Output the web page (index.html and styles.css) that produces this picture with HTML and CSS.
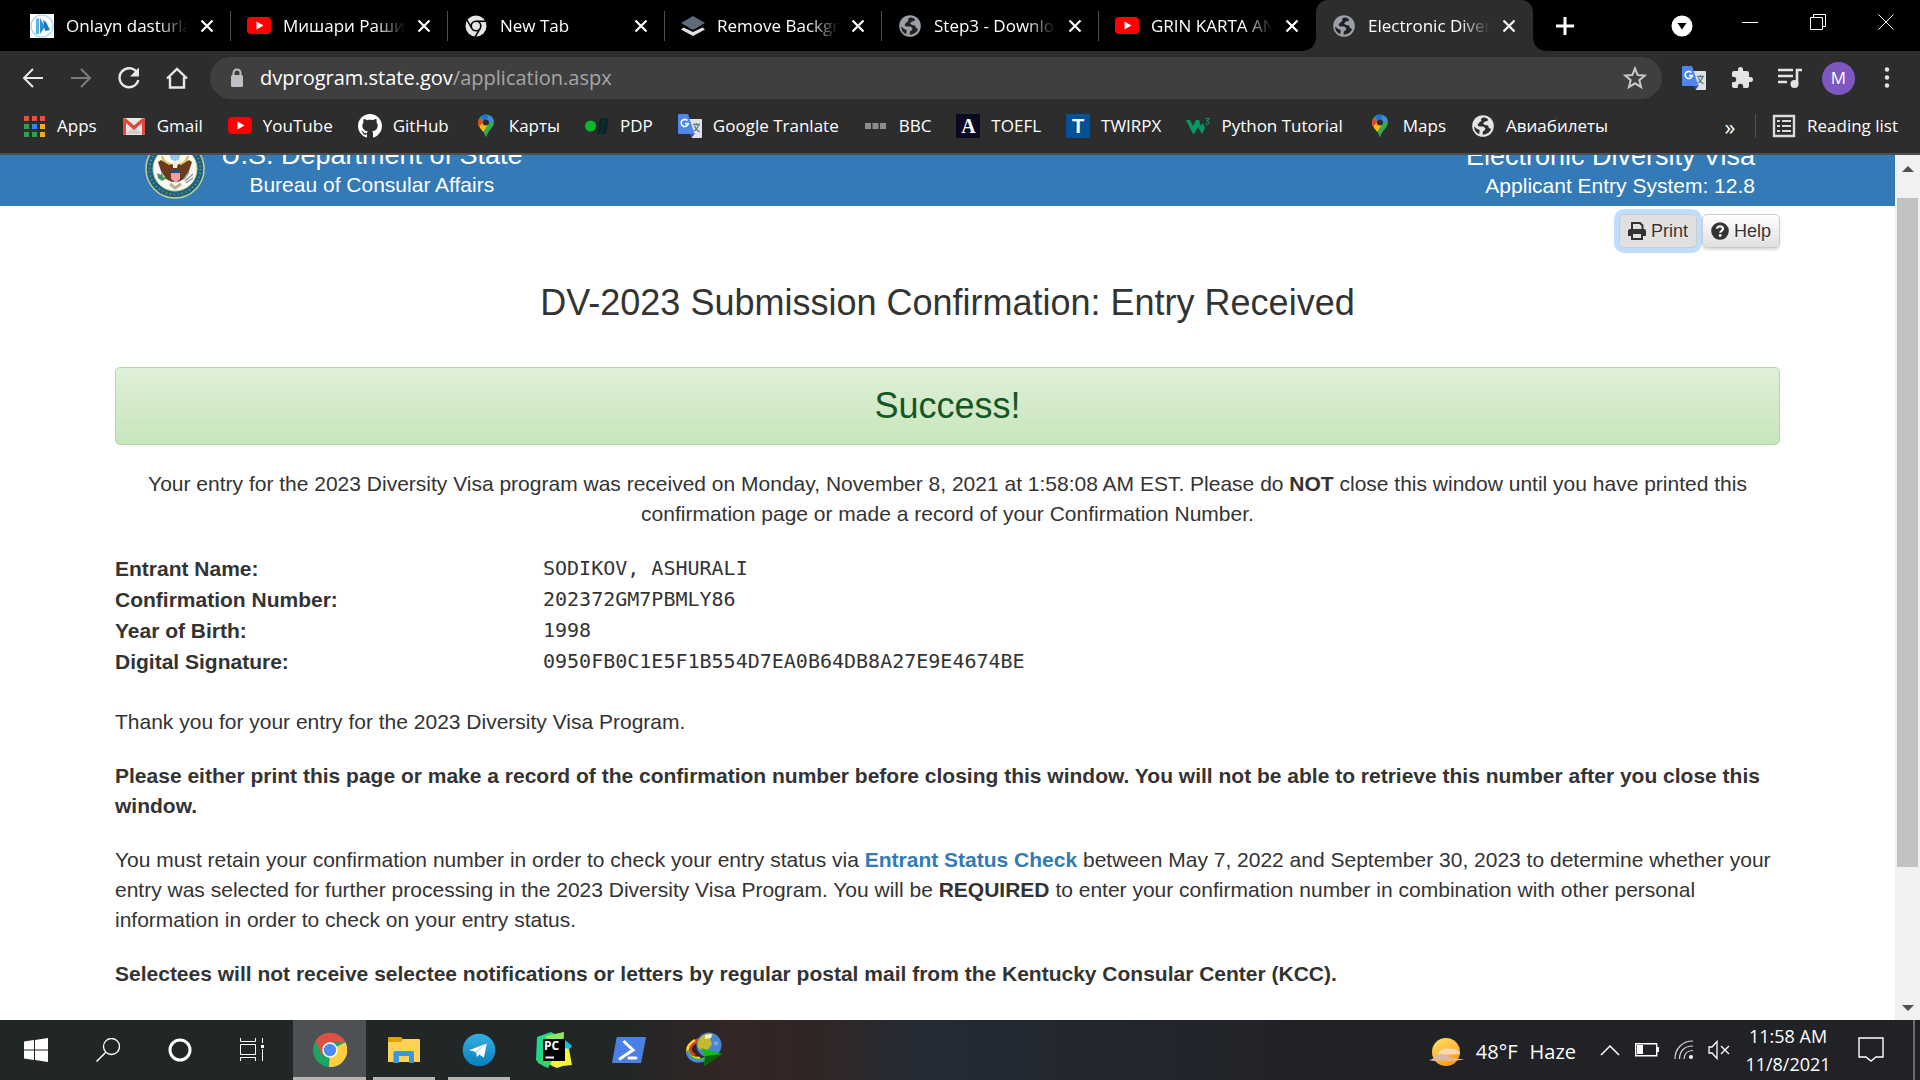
FILE: index.html
```html
<!DOCTYPE html>
<html lang="en">
<head>
<meta charset="utf-8">
<title>Electronic Diversity Visa</title>
<link rel="stylesheet" href="styles.css">
</head>
<body>
<svg class="sprites" aria-hidden="true">
  <symbol id="youtube" viewBox="0 0 24 24"><rect y="3" width="24" height="17" rx="4" fill="#f00"/><path d="M9.500 7.500v8l7-4z" fill="#fff"/></symbol>
  <symbol id="globe" viewBox="0 0 24 24"><circle cx="12" cy="12" r="10.800" fill="currentColor"/><path d="M12 3.500c-2 .8-2.500 2-1.500 3.200l-2.500 2-1.500 2.300 1.500 1.500h4.500l2 2-1 2-1.500.8-.5 3.200c4 .4 7.500-2.200 8.600-5.500l-2.100-1-1-2.500-3-.5-2-1.500 2-2 2.500-.5.500-2c-1.500-1-3-1.600-5-1.500z" class="globe-cut"/><path d="M3.200 12.500l3 2.500 2.500 1-.5 4.200C5.200 18.800 3 16 3.200 12.500z" class="globe-cut"/></symbol>
  <symbol id="maps" viewBox="0 0 24 24"><clipPath id="pin"><path d="M12 .5a8 8 0 0 0-8 8c0 5 5.500 7 8 15 2.500-8 8-10 8-15a8 8 0 0 0-8-8z"/></clipPath><g clip-path="url(#pin)"><path fill="#34a853" d="M0 0h24v24H0z"/><path fill="#fbbc04" d="M0 18L16 3l-8 18z"/><path fill="#fbbc04" d="M3 10l5-2 6 3-7 9z"/><path fill="#ea4335" d="M0 0l10 8-7 6z"/><path fill="#1a73e8" d="M4 0l8 9 3-9z"/><path fill="#4285f4" d="M8 12L18 0l4 6z"/></g><circle cx="12" cy="8.500" r="3" fill="#2d2d2d"/></symbol>
  <symbol id="translate" viewBox="0 0 24 24"><path fill="#dfe3e8" d="M9 5h14a1 1 0 0 1 1 1v17a1 1 0 0 1-1 1h-9z"/><path fill="#3349b8" d="M11 19h6l-3.500 5z"/><path fill="#4f86ec" d="M1 0h9l6.500 20H1a1 1 0 0 1-1-1V1a1 1 0 0 1 1-1z"/><path d="M9.500 6.600a3.600 3.600 0 1 0 .8 3H7" fill="none" stroke="#fff" stroke-width="1.600"/><path d="M15 10.500h7M18.500 9v1.500M20.500 11c-.7 3-2.500 5-5 6M16.500 12c1 2.500 2.500 4.500 5 6" fill="none" stroke="#607d8b" stroke-width="1.300"/></symbol>
  <symbol id="close" viewBox="0 0 14 14"><path d="M1.500 1.500l11 11M12.500 1.500l-11 11" stroke="#fff" stroke-width="2.200" fill="none"/></symbol>
</svg>

<header class="browser">
  <div class="tabstrip">
    <div class="tab"><svg class="icon" viewBox="0 0 24 24"><path fill="#fff" d="M0 0h24v24H0z"/><circle cx="12" cy="12" r="11" fill="#fff" stroke="#a5d2f0" stroke-width="1.200"/><path d="M6 5l3-1v16H6z" fill="#5ab4ea"/><path d="M10 4l5 9-5 7z" fill="#2b8fd6"/><path d="M13 6l3 2 4 8-5 1z" fill="#1976c5"/></svg><span class="tab-title">Onlayn dasturlash</span><button class="tab-close" aria-label="Close tab"><svg><use href="#close"/></svg></button></div>
    <div class="tab"><svg class="icon"><use href="#youtube"/></svg><span class="tab-title">Мишари Рашид</span><button class="tab-close" aria-label="Close tab"><svg><use href="#close"/></svg></button></div>
    <div class="tab"><svg class="icon" viewBox="0 0 24 24"><circle cx="12" cy="12" r="10.500" fill="#e4e5e7"/><circle cx="12" cy="12" r="4.800" fill="#e4e5e7" stroke="#000" stroke-width="1.600"/><path d="M12 7.200h10M7.800 14.400L3 6M16.200 14.400L11 23" stroke="#000" stroke-width="1.500"/></svg><span class="tab-title">New Tab</span><button class="tab-close" aria-label="Close tab"><svg><use href="#close"/></svg></button></div>
    <div class="tab"><svg class="icon" viewBox="0 0 24 24"><path d="M2.500 13.500L12 18l9.500-4.500 2.500 2L12 22 0 15.500z" fill="#dfe3e6"/><path d="M12 2l12 7-12 7L0 9z" fill="#5b6b7b"/></svg><span class="tab-title">Remove Background</span><button class="tab-close" aria-label="Close tab"><svg><use href="#close"/></svg></button></div>
    <div class="tab"><svg class="icon globe-gray"><use href="#globe"/></svg><span class="tab-title">Step3 - Download</span><button class="tab-close" aria-label="Close tab"><svg><use href="#close"/></svg></button></div>
    <div class="tab"><svg class="icon"><use href="#youtube"/></svg><span class="tab-title">GRIN KARTA ANKETA</span><button class="tab-close" aria-label="Close tab"><svg><use href="#close"/></svg></button></div>
    <div class="tab tab-active"><svg class="icon globe-gray"><use href="#globe"/></svg><span class="tab-title">Electronic Diversity</span><button class="tab-close" aria-label="Close tab"><svg><use href="#close"/></svg></button></div>
    <button class="new-tab" aria-label="New tab"><svg viewBox="0 0 18 18"><path d="M9 0v18M0 9h18" stroke="#fff" stroke-width="3"/></svg></button>
    <div class="window-controls">
      <button aria-label="Search tabs"><svg class="search-tabs" viewBox="0 0 22 22"><circle cx="11" cy="11" r="10.500" fill="#fff"/><path d="M6.500 8h9L11 14.500z" fill="#000"/></svg></button>
      <button aria-label="Minimize"><svg viewBox="0 0 16 16"><path d="M0 8.500h16" stroke="#fff"/></svg></button>
      <button aria-label="Restore"><svg viewBox="0 0 16 16"><path d="M.5 3.500h12v12H.5zM3.500 3.500v-3h12v12h-3" fill="none" stroke="#fff"/></svg></button>
      <button aria-label="Close"><svg viewBox="0 0 16 16"><path d="M.5.5l15 15M15.500.5l-15 15" stroke="#fff"/></svg></button>
    </div>
  </div>

  <div class="toolbar">
    <button aria-label="Back"><svg viewBox="0 0 24 24"><path d="M22 12H3M12 3l-9 9 9 9" fill="none" stroke="#e8e8e8" stroke-width="2"/></svg></button>
    <button aria-label="Forward"><svg viewBox="0 0 24 24"><path d="M2 12h19M12 3l9 9-9 9" fill="none" stroke="#7c7c7c" stroke-width="2"/></svg></button>
    <button aria-label="Reload"><svg viewBox="0 0 24 24"><path d="M20 6.500A9.500 9.500 0 1 0 21.300 14" fill="none" stroke="#e8e8e8" stroke-width="2.400"/><path d="M22 1.500v9h-9z" fill="#e8e8e8"/></svg></button>
    <button aria-label="Home"><svg viewBox="0 0 24 24"><path d="M2 12.500L12 3l10 9.500M5 11v10.500h14V11" fill="none" stroke="#e8e8e8" stroke-width="2.400"/></svg></button>
    <div class="omnibox">
      <svg class="lock" viewBox="0 0 14 20"><path d="M3.500 9V5a3.500 3.500 0 0 1 7 0v4" fill="none" stroke="#bdc1c6" stroke-width="2"/><rect x="1" y="7" width="12" height="12" rx="1.500" fill="#bdc1c6"/></svg>
      <span class="url">dvprogram.state.gov<span class="url-path">/application.aspx</span></span>
      <svg class="star" viewBox="0 0 24 24"><path d="M12 2.500l2.700 6.600 7.100.5-5.500 4.600 1.800 6.900-6.100-3.800-6.100 3.800 1.800-6.900-5.500-4.600 7.100-.5z" fill="none" stroke="#c8c8c8" stroke-width="2"/></svg>
    </div>
    <div class="tools">
      <button aria-label="Translate"><svg><use href="#translate"/></svg></button>
      <button aria-label="Extensions"><svg viewBox="0 0 24 24"><path d="M20.500 11H19V7a2 2 0 0 0-2-2h-4V3.500a2.500 2.500 0 0 0-5 0V5H4a2 2 0 0 0-2 2v3.800h1.500a2.700 2.700 0 0 1 0 5.400H2V20a2 2 0 0 0 2 2h3.800v-1.500a2.700 2.700 0 0 1 5.400 0V22H17a2 2 0 0 0 2-2v-4h1.500a2.500 2.500 0 0 0 0-5z" fill="#e4e4e4"/></svg></button>
      <button aria-label="Media controls"><svg viewBox="0 0 24 24"><path d="M0 4h15M0 10h15M0 16h9" stroke="#e4e4e4" stroke-width="2.400"/><path d="M19 18V4h5" fill="none" stroke="#e4e4e4" stroke-width="2.600"/><circle cx="16.500" cy="18" r="4" fill="#e4e4e4"/></svg></button>
      <button class="avatar" aria-label="Profile">M</button>
      <button aria-label="Menu"><svg viewBox="0 0 24 24"><g fill="#e4e4e4"><circle cx="12" cy="3.500" r="2.200"/><circle cx="12" cy="11.500" r="2.200"/><circle cx="12" cy="19.500" r="2.200"/></g></svg></button>
    </div>
  </div>

  <nav class="bookmarks">
    <a href="#"><svg class="icon" viewBox="0 0 24 24"><path d="M2 2h5v5H2zM10 2h5v5h-5zM18 2h5v5h-5z" fill="#ee4b3a"/><path d="M2 10h5v5H2zM2 18h5v5H2zM10 18h5v5h-5z" fill="#2fa052"/><path d="M10 10h5v5h-5z" fill="#2d87f3"/><path d="M18 10h5v5h-5zM18 18h5v5h-5z" fill="#f9ab12"/></svg>Apps</a>
    <a href="#"><svg class="icon" viewBox="0 0 24 24"><rect x="1" y="4" width="22" height="17" rx="2" fill="#e9e6e4"/><path d="M4 20l8-8 8 8z" fill="#d2cecb"/><path d="M1 6a2 2 0 0 1 3-1.500l8 7 8-7A2 2 0 0 1 23 6v13a2 2 0 0 1-2 2h-1V9l-8 7-8-7v12H3a2 2 0 0 1-2-2z" fill="#dd4b3e"/></svg>Gmail</a>
    <a href="#"><svg class="icon"><use href="#youtube"/></svg>YouTube</a>
    <a href="#"><svg class="icon" viewBox="0 0 16 16"><path fill="#fff" d="M8 0C3.580 0 0 3.580 0 8c0 3.540 2.290 6.530 5.470 7.590.4.070.55-.17.550-.38 0-.19-.01-.82-.01-1.490-2.010.37-2.530-.49-2.690-.94-.09-.23-.48-.94-.82-1.130-.28-.15-.68-.52-.01-.53.630-.01 1.080.58 1.230.82.720 1.210 1.870.87 2.330.66.070-.52.280-.87.510-1.070-1.780-.2-3.640-.89-3.640-3.950 0-.87.310-1.590.82-2.150-.08-.2-.36-1.020.08-2.120 0 0 .67-.21 2.200.82.640-.18 1.320-.27 2-.27s1.360.09 2 .27c1.530-1.040 2.200-.82 2.200-.82.440 1.100.16 1.920.08 2.120.51.560.82 1.270.82 2.150 0 3.070-1.870 3.750-3.650 3.950.29.250.54.730.54 1.480 0 1.070-.01 1.930-.01 2.200 0 .21.150.46.550.38A8.010 8.010 0 0 0 16 8c0-4.420-3.580-8-8-8z"/></svg>GitHub</a>
    <a href="#"><svg class="icon"><use href="#maps"/></svg>Карты</a>
    <a href="#"><svg class="icon" viewBox="0 0 24 24"><circle cx="5.500" cy="12" r="5.500" fill="#08b82f"/><path d="M15 4h4l-3 16h-4zM20 4h4l-3 16h-4z" fill="#06282c"/></svg>PDP</a>
    <a href="#"><svg class="icon"><use href="#translate"/></svg>Google Tranlate</a>
    <a href="#"><svg class="icon" viewBox="0 0 24 24"><path d="M1 9h6v6H1zM8.500 9h6v6h-6zM16 9h6v6h-6z" fill="#8c8c8c"/></svg>BBC</a>
    <a href="#"><span class="icon letter letter-a">A</span>TOEFL</a>
    <a href="#"><span class="icon letter letter-t">T</span>TWIRPX</a>
    <a href="#"><svg class="icon" viewBox="0 0 24 24"><path d="M0 6h4l3 6 3-6h3l2 6 2-3 2 5-3 6-4-7-4 7H7z" fill="#059862"/><path d="M19.500 4.500h3.500l-2 2.500c3 0 2.500 4-1.500 3" fill="none" stroke="#059862" stroke-width="1.200"/></svg>Python Tutorial</a>
    <a href="#"><svg class="icon"><use href="#maps"/></svg>Maps</a>
    <a href="#"><svg class="icon globe-light"><use href="#globe"/></svg>Авиабилеты</a>
    <button class="more" aria-label="More bookmarks">»</button>
    <a class="reading" href="#"><svg class="icon" viewBox="0 0 24 24"><path d="M2 2h20v20H2z" fill="none" stroke="#dcdcdc" stroke-width="2.400"/><path d="M5 7h3M10 7h9M5 12h3M10 12h9M5 17h3M10 17h9" stroke="#dcdcdc" stroke-width="2.200"/></svg>Reading list</a>
  </nav>
</header>

<div class="viewport">
  <div class="page">
    <header class="banner">
      <div class="agency">
        <svg class="seal" viewBox="0 0 60 60"><circle cx="30" cy="30" r="29" fill="#1b6284" stroke="#c9cf8c" stroke-width="1.500"/><circle cx="30" cy="30" r="25.500" fill="none" stroke="#7d9c70" stroke-width="2" stroke-dasharray="1 3"/><circle cx="30" cy="30" r="22" fill="#fbfaf4" stroke="#c9cf8c"/><circle cx="30" cy="17" r="5" fill="#8ecbe8"/><path d="M17 17c1 5 5 9 9 8M43 17c-1 5-5 9-9 8" fill="none" stroke="#e0c35c" stroke-width="2.500"/><path d="M30 28l-3-3-3 1-8-5-3 2 3 9 5 8 6 3h6l6-3 5-8 3-9-3-2-8 5-3-1z" fill="#6b3b1f"/><path d="M28 24l2-2 3 2-1 5h-4z" fill="#f1ede0"/><path d="M26 31h9v3h-9z" fill="#1d4e89"/><path d="M26 34h9v6l-4 4-5-4z" fill="#f0a0a5"/><path d="M12 34l4 2 1-4 1 6 4 1-5 3-4-3z" fill="#3f9162"/><path d="M40 42l8-7M41 44l7-5M39 40l5-7" stroke="#8c9aa0" stroke-width="1.500"/><path d="M25 45l5 4 6-4" stroke="#b9ad92" stroke-width="3" fill="none"/></svg>
        <div class="banner-text"><div class="banner-title">U.S. Department of State</div><div class="banner-sub">Bureau of Consular Affairs</div></div>
      </div>
      <div class="banner-text banner-system"><div class="banner-title">Electronic Diversity Visa</div><div class="banner-sub">Applicant Entry System: 12.8</div></div>
    </header>

    <main class="content">
      <div class="actions">
        <button class="btn btn-focus"><svg viewBox="0 0 18 18"><path d="M4 8V1h8l2.500 2.500V8" fill="none" stroke="#333" stroke-width="2"/><path d="M2 7h14a2 2 0 0 1 2 2v5h-3v-2H3v2H0V9a2 2 0 0 1 2-2z" fill="#333"/><path d="M4 12v5h10v-5" fill="none" stroke="#333" stroke-width="2"/></svg>Print</button>
        <button class="btn"><svg viewBox="0 0 18 18"><circle cx="9" cy="9" r="8.800" fill="#333"/><path d="M6 6.800C6.200 3.500 12 3.500 12 6.800c0 2-2.800 2-2.800 4" fill="none" stroke="#fff" stroke-width="2.200"/><circle cx="9.200" cy="13.500" r="1.400" fill="#fff"/></svg>Help</button>
      </div>
      <h1>DV-2023 Submission Confirmation: Entry Received</h1>
      <div class="alert">Success!</div>
      <p class="received">Your entry for the 2023 Diversity Visa program was received on Monday, November 8, 2021 at 1:58:08 AM EST. Please do <strong>NOT</strong> close this window until you have printed this confirmation page or made a record of your Confirmation Number.</p>
      <dl class="entry">
        <dt>Entrant Name:</dt><dd>SODIKOV, ASHURALI</dd>
        <dt>Confirmation Number:</dt><dd>202372GM7PBMLY86</dd>
        <dt>Year of Birth:</dt><dd>1998</dd>
        <dt>Digital Signature:</dt><dd>0950FB0C1E5F1B554D7EA0B64DB8A27E9E4674BE</dd>
      </dl>
      <p>Thank you for your entry for the 2023 Diversity Visa Program.</p>
      <p><strong>Please either print this page or make a record of the confirmation number before closing this window. You will not be able to retrieve this number after you close this window.</strong></p>
      <p>You must retain your confirmation number in order to check your entry status via <a href="#">Entrant Status Check</a> between May 7, 2022 and September 30, 2023 to determine whether your entry was selected for further processing in the 2023 Diversity Visa Program. You will be <strong>REQUIRED</strong> to enter your confirmation number in combination with other personal information in order to check on your entry status.</p>
      <p><strong>Selectees will not receive selectee notifications or letters by regular postal mail from the Kentucky Consular Center (KCC).</strong></p>
    </main>
  </div>
  <div class="scrollbar"><span class="arrow arrow-up"></span><div class="track"><div class="thumb"></div></div><span class="arrow arrow-down"></span></div>
</div>

<footer class="taskbar">
  <div class="launchers">
    <button aria-label="Start"><svg viewBox="0 0 24 24"><path d="M0 3.500L10 2v9.500H0zM11 1.900L24 0v11.500H11zM0 12.500h10V22L0 20.500zM11 12.500h13V24l-13-1.900z" fill="#fff"/></svg></button>
    <button aria-label="Search"><svg viewBox="0 0 24 24"><circle cx="15.500" cy="8.500" r="8" fill="none" stroke="#fff" stroke-width="1.300"/><path d="M9.800 14.200L.5 23.500" stroke="#fff" stroke-width="1.500"/></svg></button>
    <button aria-label="Cortana"><svg viewBox="0 0 24 24"><circle cx="12" cy="12" r="10" fill="none" stroke="#fff" stroke-width="3"/></svg></button>
    <button aria-label="Task view"><svg viewBox="0 0 24 24"><path d="M.5 0v3.500h15V0M.5 6.500h15v10H.5zM.5 23v-3.500h15V23M22.500 0v5M22.500 11v12" fill="none" stroke="#fff"/><path d="M21 7h3v3h-3z" fill="#fff"/></svg></button>
    <button class="running active" aria-label="Chrome"><svg class="app" viewBox="0 0 34 34"><circle cx="17" cy="17" r="17" fill="#1da462"/><path d="M17 17l15.400-7.700A17 17 0 0 1 16 34z" fill="#ffcd40"/><path d="M17 17l-8 5L2.600 8A17 17 0 0 1 32.400 9.300H17z" fill="#dd5144"/><circle cx="17" cy="17" r="7.700" fill="#fff"/><circle cx="17" cy="17" r="6.200" fill="#4c8bf5"/></svg></button>
    <button class="running" aria-label="File Explorer"><svg class="app" viewBox="0 0 34 34"><path d="M1 5a1 1 0 0 1 1-1h12l2 2v4H1z" fill="#e2a000"/><path d="M1 9h13l2-3h16a1 1 0 0 1 1 1v22H1z" fill="#ffd257"/><path d="M6.500 30V19.500A1.500 1.500 0 0 1 8 18h17.500a1.500 1.500 0 0 1 1.500 1.500V30h-5v-7h-10v7z" fill="#3a96dd"/></svg></button>
    <button class="running grouped" aria-label="Telegram"><svg class="app" viewBox="0 0 34 34"><linearGradient id="tg" x2="0" y2="1"><stop stop-color="#37aee2"/><stop offset="1" stop-color="#087fbd"/></linearGradient><circle cx="17" cy="17" r="16.300" fill="url(#tg)"/><path d="M7 17.300L24.800 10.500l-2.900 14.200-4.500-3.300-2.500 2.600-.7-4.200-2-1.200z" fill="#fff"/><path d="M14.200 20l9-8.500-10.800 7.200z" fill="#b8d8ea"/></svg></button>
    <button aria-label="PyCharm"><svg class="app-large" viewBox="0 0 36 36"><path d="M1 5l14-5 6 3 7-3v9L8 34 0 28z" fill="#21d789"/><path d="M10 4l18-4-1 8-18 6z" fill="#8fe85b"/><path d="M25 9l4-1 7 6-4 5-5 2z" fill="#07c3f2"/><path d="M29 16l4 1 3 16-9 1-6 2-5-2-6-5z" fill="#f5f33e"/><path d="M0 26l8-2v10l-6-3zM8 29h8l-4 7-5-2z" fill="#31d36c"/><path d="M7 7h22v22H7z"/><text x="8" y="18" class="pc">PC</text><path d="M9.500 25.500H18" stroke="#fff" stroke-width="2"/></svg></button>
    <button aria-label="PowerShell"><svg class="app" viewBox="0 0 34 34"><path d="M5 4h28a1 1 0 0 1 1 1l-5 25H0L4.500 5z" fill="#4b80e4"/><path d="M11.500 8l9.500 9-14 9.500" fill="none" stroke="#fff" stroke-width="3"/><path d="M17 25h7" stroke="#fff" stroke-width="3" stroke-linecap="round"/></svg></button>
    <button aria-label="Download Manager"><svg class="app-large" viewBox="0 0 36 36"><g fill="none" stroke-width="2.500"><path d="M13 8C1 12 2 21 9 24" stroke="#e03a25" stroke-width="4"/><path d="M9 8C-3 15 0 27 14 26" stroke="#ffd929"/><path d="M2 18c1 9 9 12 18 8" stroke="#35c53c"/><path d="M1 20c2 9 11 11 18 8" stroke="#5182e8"/></g><circle cx="23" cy="13" r="12.500" fill="#4686d5"/><path d="M14 6c5-6 12-5 13-3l-3 4 2 5-5 7-6-1c-5-3-4-8-1-12z" fill="#c7b92d"/><path d="M19 3l7-1-1 4-6 1z" fill="#f4efd0"/><path d="M29 9l4 1-2 4-4-2z" fill="#79a3e6"/><path d="M15 16l21 6-18 12 1-10z" fill="#13bb0b"/><path d="M19 24l17-2-18 12z" fill="#07640a"/></svg></button>
  </div>
  <div class="tray">
    <div class="weather"><svg viewBox="0 0 36 30"><linearGradient id="sun" x2=".5" y2="1"><stop stop-color="#ffe46b"/><stop offset="1" stop-color="#ff9d16"/></linearGradient><circle cx="18" cy="15" r="14" fill="url(#sun)"/><path d="M9 18c3-6 9-8 14-6 5-1 9 2 9 5z" fill="#f6d8ac"/><path d="M1 23c6-1 7-6 12-6 6 0 8 5 20 5l3 1c-12 0-13 2-18 1s-10 1-17-1z" fill="#d9b9a0"/></svg><span>48°F</span><span>Haze</span></div>
    <svg class="chevron" viewBox="0 0 20 12"><path d="M1 11l9-9 9 9" fill="none" stroke="#fff" stroke-width="1.500"/></svg>
    <svg class="battery" viewBox="0 0 24 14"><path d="M.7.7h21v12h-21z" fill="none" stroke="#fff" stroke-width="1.400"/><path d="M2 2h6v9H2zM22 4h2v5h-2z" fill="#fff"/></svg>
    <svg class="wifi" viewBox="0 0 20 20"><g fill="none" stroke="#d8d8d8" stroke-width="1.200"><path d="M1 19C1 9 8 1 19 1M5.500 19c0-8 5-13 13.500-13M10 19c0-5 3-8.500 9-8.500"/></g><circle cx="17" cy="17" r="2" fill="#fff"/></svg>
    <svg class="volume" viewBox="0 0 22 20"><path d="M1 7h3l5-5.500v17L4 13H1zM13 6l8 8M21 6l-8 8" fill="none" stroke="#fff" stroke-width="1.300"/></svg>
    <div class="clock"><span>11:58 AM</span><span>11/8/2021</span></div>
    <svg class="notice" viewBox="0 0 26 26"><path d="M1 1h24v19h-7l-5 4-5-4H1z" fill="none" stroke="#fff" stroke-width="1.400"/></svg>
    <div class="peek"></div>
  </div>
</footer>
</body>
</html>
```
FILE: styles.css
```css
* { box-sizing: border-box; }
body {
  margin: 0;
  height: 100vh;
  display: flex;
  flex-direction: column;
  overflow: hidden;
  background: #fff;
  color: #333;
  font: 21px/30px "Liberation Sans", Arial, sans-serif;
}
button { border: 0; padding: 0; background: none; color: inherit; font: inherit; }
svg { display: block; flex: none; }
.sprites { position: absolute; width: 0; height: 0; }
.icon { width: 24px; height: 24px; flex: none; }

/* Browser frame */
.browser {
  flex: none;
  background: #2d2d2d;
  border-bottom: 2px solid #4e4e4e;
  color: #fff;
  font: 17px/24px "Open Sans", "Noto Sans", sans-serif;
}
.tabstrip { display: flex; height: 51px; background: #000; padding-left: 14px; }
.tab {
  position: relative;
  display: flex;
  align-items: center;
  flex: 0 1 217px;
  min-width: 0;
  padding: 0 17px 0 16px;
  gap: 12px;
}
.tab:not(.tab-active)::after {
  content: "";
  position: absolute;
  right: 0;
  top: 11px;
  width: 1px;
  height: 30px;
  background: #4c4c4c;
}
.tab:nth-child(6)::after { display: none; }
.tab-active { background: #2d2d2d; border-radius: 12px 12px 0 0; }
.tab-active::before, .tab-active::after {
  content: "";
  position: absolute;
  bottom: 0;
  width: 12px;
  height: 12px;
}
.tab-active::before { left: -12px; background: radial-gradient(circle at 0 0, #000 11px, #2d2d2d 12px); }
.tab-active::after { right: -12px; background: radial-gradient(circle at 100% 0, #000 11px, #2d2d2d 12px); }
.tab-title {
  flex: 1;
  min-width: 0;
  overflow: hidden;
  white-space: nowrap;
  -webkit-mask-image: linear-gradient(to right, #000 75%, transparent);
  mask-image: linear-gradient(to right, #000 75%, transparent);
}
.tab-close svg { width: 14px; height: 14px; }
.globe-gray { color: #9aa0a6; --cut: #202124; }
.globe-light { color: #e4e4e4; --cut: #2d2d2d; }
.globe-cut { fill: var(--cut); }
.new-tab { width: 64px; display: grid; place-items: center; }
.new-tab svg { width: 18px; height: 18px; }
.window-controls { display: flex; margin-left: auto; }
.window-controls button { width: 68px; display: grid; place-items: center; padding-bottom: 8px; }
.window-controls svg { width: 16px; height: 16px; }
.window-controls .search-tabs { width: 22px; height: 22px; margin-top: 8px; }

.toolbar { display: flex; align-items: center; height: 54px; padding: 0 9px; }
.toolbar > button { width: 48px; display: grid; place-items: center; }
.toolbar button svg { width: 24px; height: 24px; }
.omnibox {
  flex: 1;
  display: flex;
  align-items: center;
  gap: 16px;
  height: 42px;
  margin-left: 9px;
  padding: 0 15px 0 20px;
  border-radius: 21px;
  background: #3f3f3f;
  font-size: 20px;
}
.lock { width: 14px; height: 20px; }
.star { width: 24px; height: 24px; margin-left: auto; }
.url-path { color: #a6a6a6; }
.tools { display: flex; align-items: center; margin-left: 8px; }
.tools button { width: 48px; display: grid; place-items: center; }
.tools .avatar {
  width: 33px;
  height: 33px;
  margin: 0 8px;
  border-radius: 50%;
  background: #7e57c2;
}

.bookmarks { display: flex; align-items: center; height: 48px; padding: 0 22px 6px; gap: 25px; }
.bookmarks a { display: flex; align-items: center; gap: 11px; color: #fff; text-decoration: none; white-space: nowrap; }
.letter { display: grid; place-items: center; font: bold 20px/24px "Liberation Serif", serif; }
.letter-a { background: #0a0b22; }
.letter-t { background: #02529a; font-family: "Liberation Sans", sans-serif; }
.more { margin-left: auto; width: 24px; margin-right: -12px; font-size: 22px; }
.bookmarks .reading { border-left: 1px solid #555; padding-left: 16px; }

/* Web page */
.viewport { flex: 1; min-height: 0; display: flex; }
.page { flex: 1; min-width: 0; overflow: hidden; }
.banner {
  display: flex;
  justify-content: space-between;
  align-items: flex-end;
  height: 51px;
  padding: 0 140px 0 145px;
  background: #337ab7;
  color: #fff;
}
.agency { display: flex; align-items: flex-end; gap: 16px; }
.seal { width: 60px; height: 60px; margin-bottom: 7px; }
.banner-text { text-align: center; padding-bottom: 6px; white-space: nowrap; }
.banner-title { font-size: 27px; line-height: 30px; }
.banner-sub { line-height: 30px; }
.banner-system { text-align: right; padding-bottom: 5px; }
.content { padding: 8px 115px 0; }
.actions { display: flex; justify-content: flex-end; gap: 5px; }
.btn {
  display: flex;
  align-items: center;
  gap: 5px;
  height: 34px;
  padding: 0 8px;
  border: 1px solid #ccc;
  border-radius: 5px;
  background: linear-gradient(#fff, #e0e0e0);
  box-shadow: 0 2px 2px #0002;
  font-size: 18px;
  text-shadow: 0 1px 0 #fff;
}
.btn svg { width: 18px; height: 18px; }
.btn-focus { background: #e0e0e0; box-shadow: 0 0 0 5px #bfdeff; }
h1 { margin: 34px 0 43px; font-size: 36px; line-height: 42px; font-weight: 400; text-align: center; }
.alert {
  height: 78px;
  border: 1px solid #b2dba1;
  border-radius: 5px;
  background: linear-gradient(#dff0d8, #c8e5bc);
  color: #155724;
  font-size: 36px;
  line-height: 76px;
  text-align: center;
}
p { margin: 0 0 24px; }
.content a { color: #337ab7; font-weight: 700; text-decoration: none; }
.received { margin-top: 24px; text-align: center; }
.entry { display: grid; grid-template-columns: 428px 1fr; margin: 0 0 30px; line-height: 31px; }
.entry dt { font-weight: 700; }
.entry dd { margin: 0; font-family: "DejaVu Sans Mono", monospace; font-size: 20px; }

.scrollbar { display: flex; flex-direction: column; align-items: center; justify-content: space-between; width: 25px; padding: 11px 0 9px; background: #f1f1f1; }
.arrow { border: 6px solid transparent; }
.arrow-up { border-top: 0; border-bottom-color: #505050; }
.arrow-down { border-bottom: 0; border-top-color: #505050; }
.track { flex: 1; width: 21px; padding: 26px 0 20px; }
.thumb { height: 85%; background: #c1c1c1; }

/* Taskbar */
.taskbar {
  flex: none;
  display: flex;
  justify-content: space-between;
  height: 60px;
  background: linear-gradient(to right, #212626 0, #212626 32%, #332624 38%, #302626 43%, #232b35 48%, #232830 55%, #212226 68%);
  color: #fff;
  font: 20px/24px "Open Sans", "Noto Sans", sans-serif;
}
.launchers { display: flex; }
.launchers button { width: 72px; display: grid; place-items: center; border-bottom: 3px solid transparent; padding-top: 3px; }
.launchers button:nth-child(n+5) { width: 75px; }
.launchers svg { width: 24px; height: 24px; }
.launchers .app { width: 34px; height: 34px; }
.launchers .app-large { width: 36px; height: 36px; }
.launchers .running { background: linear-gradient(#b7b4b1, #b7b4b1) bottom / 62px 3px no-repeat border-box; }
.launchers button.active { width: 73px; margin-left: 5px; background: #4d5153; border-bottom-color: #b7b4b1; }
.pc { fill: #fff; font: bold 12px "Open Sans", sans-serif; }
.tray { display: flex; align-items: center; }
.weather { display: flex; align-items: center; gap: 12px; margin-right: 24px; padding-top: 3px; }
.weather svg { width: 36px; height: 30px; }
.chevron { width: 20px; height: 12px; margin-right: 15px; }
.battery { width: 24px; height: 14px; margin-right: 15px; }
.wifi { width: 20px; height: 20px; margin-right: 14px; }
.volume { width: 22px; height: 20px; margin-right: 16px; }
.clock { display: flex; flex-direction: column; align-items: center; width: 84px; font-size: 18px; line-height: 28px; white-space: nowrap; }
.notice { width: 26px; height: 26px; margin: 0 29px 0 28px; }
.peek { width: 7px; align-self: stretch; border-left: 2px solid #6d6d6f; }
```
